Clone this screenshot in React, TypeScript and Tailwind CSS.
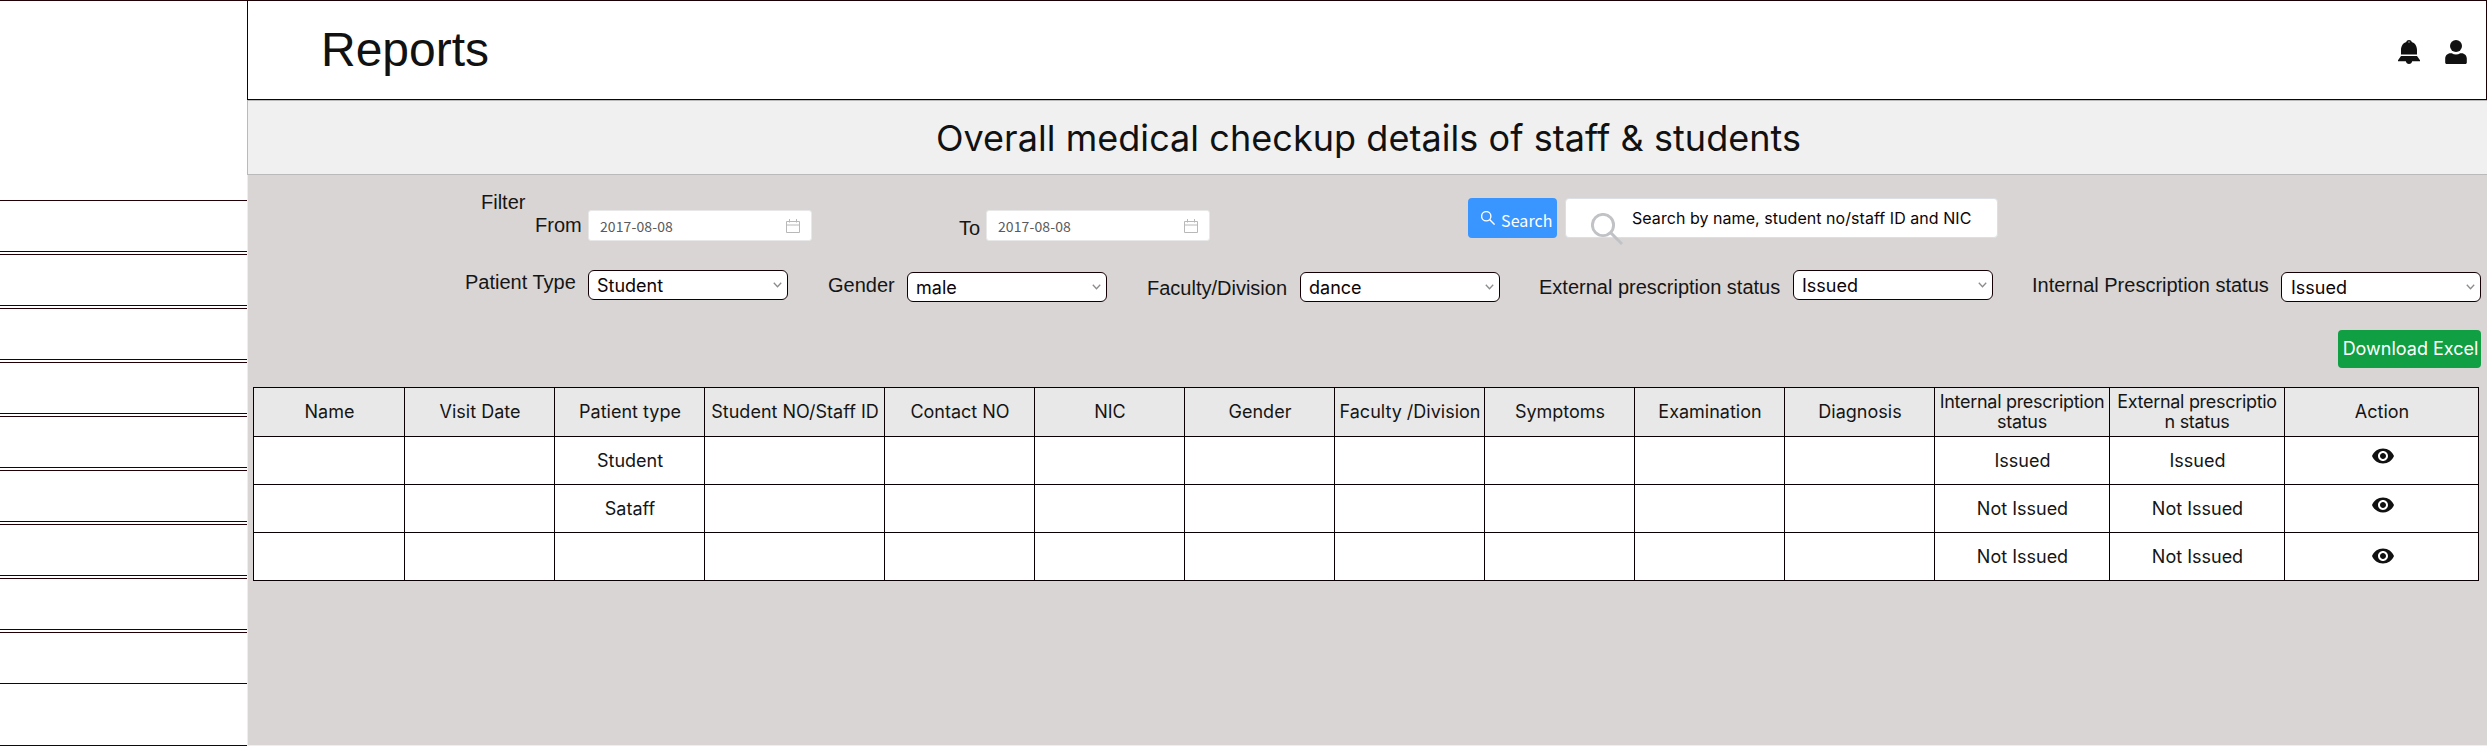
import type { ReactNode } from "react";
import { MdVisibility } from "react-icons/md";

function BellIcon() {
  return (
    <svg viewBox="0 0 22 24" className="h-6 w-[22px]" fill="#111">
      <path d="M3 14.500V10C3 5.800 5.200 2.800 8.300 1.900C8.600.7 9.600 0 11 0s2.400.7 2.700 1.900C16.800 2.800 19 5.800 19 10v4.500z" />
      <path d="M3 16h16l3 4.200V21.200H14.200C13.900 22.800 12.700 24 11 24S8.100 22.800 7.800 21.200H0v-1z" />
      <circle cx="11" cy="2.100" r=".8" fill="#999" />
    </svg>
  );
}

function UserIcon() {
  return (
    <svg viewBox="0 0 22 24" className="h-6 w-[22px]" fill="#111">
      <circle cx="11" cy="6" r="6" />
      <path d="M5.500 13.200h1.300c1.200.8 2.600 1.200 4.200 1.200s3-.4 4.200-1.200h1.300c3 0 5.300 2.400 5.300 5.300v4c0 .9-.6 1.500-1.500 1.500H1.700C.8 24 .2 23.400.2 22.500v-4c0-2.900 2.300-5.300 5.300-5.300z" />
    </svg>
  );
}

function CalendarIcon() {
  return (
    <svg viewBox="0 0 14 14" className="h-[14px] w-[14px] shrink-0" fill="none" stroke="#b8b8b8">
      <path d="M.5 2.500h13v11H.5zM.5 6h13M3.500 0v3.500M10.500 0v3.500" />
    </svg>
  );
}

function Magnifier({ className, width }: { className: string; width: number }) {
  return (
    <svg viewBox="0 0 32 32" className={className} fill="none" stroke="currentColor" strokeWidth={width}>
      <circle cx="12" cy="12" r="10.600" />
      <path d="M19.600 19.600L31 31" />
    </svg>
  );
}

function Label({ className, children }: { className: string; children: ReactNode }) {
  return (
    <span
      className={`shrink-0 whitespace-nowrap pl-px font-['Liberation_Sans',sans-serif] text-[20px] leading-[23px] text-[#151515] ${className}`}
    >
      {children}
    </span>
  );
}

function DateField({ className }: { className: string }) {
  return (
    <div
      className={`flex h-[31px] w-[224px] shrink-0 items-center justify-between rounded-[3px] border border-[#e8e8e8] bg-white pr-[11px] pl-[11px] ${className}`}
    >
      <span className="font-['Noto_Sans_CJK_SC',sans-serif] text-[14px] leading-[20px] tracking-[0.1px] text-[#5a5a5a]">
        2017-08-08
      </span>
      <CalendarIcon />
    </div>
  );
}

function SelectField({ value, className, inset = "pl-[8px]" }: { value: string; className: string; inset?: string }) {
  return (
    <div
      className={`flex h-[30px] w-[200px] shrink-0 items-center justify-between rounded-[6px] border border-[#140004] bg-white pr-[5px] ${inset} ${className}`}
    >
      <span className="pt-px text-[18px] leading-[22px] text-[#0d0406]">{value}</span>
      <svg viewBox="0 0 9 6" className="h-[6px] w-[9px]" fill="none" stroke="#8c8c8c" strokeWidth="1.300">
        <path d="M.8.8L4.500 4.800L8.200.8" />
      </svg>
    </div>
  );
}

const columns: { title: string; width: string }[] = [
  { title: "Name", width: "w-[151px]" },
  { title: "Visit Date", width: "w-[150px]" },
  { title: "Patient type", width: "w-[150px]" },
  { title: "Student NO/Staff ID", width: "w-[180px]" },
  { title: "Contact NO", width: "w-[150px]" },
  { title: "NIC", width: "w-[150px]" },
  { title: "Gender", width: "w-[150px]" },
  { title: "Faculty /Division", width: "w-[150px]" },
  { title: "Symptoms", width: "w-[150px]" },
  { title: "Examination", width: "w-[150px]" },
  { title: "Diagnosis", width: "w-[150px]" },
  { title: "Internal prescription\nstatus", width: "w-[175px]" },
  { title: "External prescriptio\nn status", width: "w-[175px]" },
  { title: "Action", width: "w-[194px]" },
];

const rows = [
  { type: "Student", internal: "Issued", external: "Issued", eye: "mb-[9px]" },
  { type: "Sataff", internal: "Not Issued", external: "Not Issued", eye: "mb-[7px]" },
  { type: "", internal: "Not Issued", external: "Not Issued", eye: "mb-px" },
];

function Sidebar() {
  return (
    <aside className="flex h-[746px] w-[247px] shrink-0 flex-col border-y border-[#210006] bg-white">
      <div className="h-[199px] shrink-0" />
      <div className="flex flex-col gap-[2px]">
        {Array.from({ length: 9 }, (_, i) => (
          <div key={i} className="h-[52px] border-y border-[#210006]" />
        ))}
      </div>
    </aside>
  );
}

export default function App() {
  return (
    <div className="flex h-[746px] w-[2487px] overflow-hidden bg-white font-['Inter',sans-serif]">
      <Sidebar />
      <div className="flex w-[2240px] shrink-0 flex-col">
        <header className="flex h-[100px] shrink-0 items-center justify-between border border-[#1a0005] bg-white pr-[19px] pl-[73px]">
          <h1 className="font-['Liberation_Sans',sans-serif] text-[48px] leading-[56px] text-[#111]">Reports</h1>
          <div className="flex gap-[25px] pt-[4px]">
            <BellIcon />
            <UserIcon />
          </div>
        </header>
        <div className="flex h-[75px] shrink-0 items-center justify-center border-y border-l border-[#b9bab9] bg-[#f0f0f0]">
          <h2 className="pl-[2px] text-[36px] leading-[44px] tracking-[0.05px] text-[#111]">
            Overall medical checkup details of staff &amp; students
          </h2>
        </div>
        <main className="flex flex-1 flex-col border-b border-l border-[#eeeeee] bg-[#d9d5d4]">
          <div className="flex h-[80px] items-start">
            <Label className="mt-[16px] ml-[232px] w-[54px]">Filter</Label>
            <Label className="mt-[39px] w-[54px]">From</Label>
            <DateField className="mt-[35px]" />
            <Label className="mt-[42px] ml-[146px] w-[28px]">To</Label>
            <DateField className="mt-[35px]" />
            <button className="mt-[23px] ml-[258px] flex h-[40px] w-[89px] shrink-0 items-start rounded-[4px] bg-[#3995ff] pt-[13px] pl-[13px] text-white">
              <Magnifier className="h-[14px] w-[14px] shrink-0" width={3.2} />
              <span className="mt-[-1px] ml-[6px] font-['Noto_Sans_CJK_SC',sans-serif] text-[16px] leading-[20px] tracking-[0.1px]">
                Search
              </span>
            </button>
            <div className="mt-[23px] ml-[8px] flex h-[40px] w-[433px] shrink-0 items-start rounded-[4px] border border-[#dcdfe6] bg-white pl-[25px]">
              <Magnifier className="mt-[14px] h-8 w-8 shrink-0 text-[#c0c2c6]" width={2.9} />
              <span className="mt-[9px] ml-[9px] whitespace-nowrap text-[16px] leading-[20px] tracking-[0.05px] text-[#0d0406]">
                Search by name, student no/staff ID and NIC
              </span>
            </div>
          </div>
          <div className="flex h-[75px] items-start">
            <Label className="mt-[16px] ml-[216px] w-[124px]">Patient Type</Label>
            <SelectField value="Student" className="mt-[15px]" />
            <Label className="mt-[19px] ml-[39px] w-[80px]">Gender</Label>
            <SelectField value="male" className="mt-[17px]" />
            <Label className="mt-[22px] ml-[39px] w-[154px]">Faculty/Division</Label>
            <SelectField value="dance" className="mt-[17px]" />
            <Label className="mt-[21px] ml-[38px] w-[255px]">External prescription status</Label>
            <SelectField value="Issued" className="mt-[15px]" />
            <Label className="mt-[19px] ml-[38px] w-[250px]">Internal Prescription status</Label>
            <SelectField value="Issued" className="mt-[17px]" inset="pl-[9px]" />
          </div>
          <div className="flex h-[57px] justify-end pr-[6px]">
            <button className="flex h-[38px] w-[143px] items-center justify-center whitespace-nowrap rounded-[4px] bg-[#109f43] pl-[2px] text-[18px] leading-[22px] text-white">
              Download Excel
            </button>
          </div>
          <table className="ml-[5px] w-[2226px] table-fixed border-separate border-spacing-0 border-t border-l border-[#0a0003] text-center text-[18px] leading-[20px] text-[#151515]">
            <thead>
              <tr className="h-[49px]">
                {columns.map((c) => (
                  <th
                    key={c.title}
                    className={`whitespace-pre border-r border-b border-[#0a0003] bg-[#e8e8e8] p-0 text-center font-normal ${c.width} ${c.title.includes("\n") ? "tracking-[-0.3px]" : "pl-px"}`}
                  >
                    {c.title}
                  </th>
                ))}
              </tr>
            </thead>
            <tbody>
              {rows.map((r, i) => (
                <tr key={i} className="h-[48px]">
                  {columns.map((c, j) => (
                    <td key={c.title} className="border-r border-b border-[#0a0003] bg-white p-0 pl-px">
                      {j === 2 && r.type}
                      {j === 11 && r.internal}
                      {j === 12 && r.external}
                      {j === 13 && <MdVisibility className={`mx-auto block h-6 w-6 translate-x-px text-[#111] ${r.eye}`} />}
                    </td>
                  ))}
                </tr>
              ))}
            </tbody>
          </table>
        </main>
      </div>
    </div>
  );
}
